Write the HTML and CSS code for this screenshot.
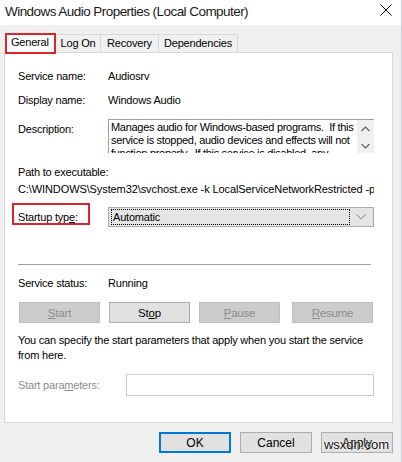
FILE: index.html
```html
<!DOCTYPE html>
<html>
<head>
<meta charset="utf-8">
<link rel="stylesheet" href="styles.css">
</head>
<body>
<div class="window">
  <div class="titlebar">
    <span class="title">Windows Audio Properties (Local Computer)</span>
    <svg class="close" width="12" height="12" viewBox="0 0 12 12"><path d="M0.5 0.5 L11.5 11.5 M11.5 0.5 L0.5 11.5" stroke="#000" stroke-width="1" fill="none"/></svg>
  </div>
  <div class="body">
    <div class="tabs">
      <div class="tab active">General</div>
      <div class="tab t-logon">Log On</div>
      <div class="tab t-recovery">Recovery</div>
      <div class="tab t-deps">Dependencies</div>
    </div>
    <div class="panel">
      <div class="row r-name"><span class="label">Service name:</span><span class="value">Audiosrv</span></div>
      <div class="row r-disp"><span class="label">Display name:</span><span class="value">Windows Audio</span></div>
      <div class="row r-desc">
        <span class="label desc-label">Description:</span>
        <div class="descbox">
          <div class="desctext">
            <div class="dline">Manages audio for Windows-based programs.&nbsp; If this</div>
            <div class="dline">service is stopped, audio devices and effects will not</div>
            <div class="dline">function properly.&nbsp; If this service is disabled, any</div>
          </div>
          <div class="scroll">
            <svg width="9" height="6" viewBox="0 0 9 6"><path d="M0.5 5 L4.5 1 L8.5 5" stroke="#606060" stroke-width="1.2" fill="none"/></svg>
            <svg width="9" height="6" viewBox="0 0 9 6"><path d="M0.5 1 L4.5 5 L8.5 1" stroke="#606060" stroke-width="1.2" fill="none"/></svg>
          </div>
        </div>
      </div>
      <div class="row r-path"><span class="label wide">Path to executable:</span></div>
      <div class="row r-pathval"><span class="pathval">C:\WINDOWS\System32\svchost.exe -k LocalServiceNetworkRestricted -p</span></div>
      <div class="row r-startup">
        <span class="label startup-label">Startup typ<u>e</u>:</span>
        <div class="combo">
          <div class="combo-sel">Automatic</div>
          <svg class="chev" width="10" height="6" viewBox="0 0 10 6"><path d="M0.5 0.5 L5 5 L9.5 0.5" stroke="#7a7a7a" stroke-width="1" fill="none"/></svg>
        </div>
      </div>
      <div class="sep"></div>
      <div class="row r-status"><span class="label">Service status:</span><span class="value">Running</span></div>
      <div class="btnrow">
        <div class="btn disabled"><u>S</u>tart</div>
        <div class="btn">St<u>o</u>p</div>
        <div class="btn disabled"><u>P</u>ause</div>
        <div class="btn disabled"><u>R</u>esume</div>
      </div>
      <p class="info">You can specify the start parameters that apply when you start the service from here.</p>
      <div class="row r-params">
        <span class="label gray">Start para<u>m</u>eters:</span>
        <div class="parambox"></div>
      </div>
    </div>
    <div class="footer">
      <div class="btn fbtn default">OK</div>
      <div class="btn fbtn">Cancel</div>
      <div class="btn fbtn">Apply</div>
    </div>
    <span class="watermark">wsxdn.com</span>
  </div>
</div>
</body>
</html>
```

FILE: styles.css
```css
html, body {
  margin: 0;
  padding: 0;
  background: #f0f0f0;
}
body {
  font-family: "Liberation Sans", Arial, sans-serif;
  font-size: 11px;
  letter-spacing: -0.2px;
  color: #000;
  width: 402px;
  height: 462px;
  overflow: hidden;
}
.window {
  position: relative;
  width: 402px;
  height: 462px;
  border-right: 1px solid #c9d3e0;
  box-sizing: border-box;
}
.titlebar {
  height: 25px;
  background: #fff;
  display: flex;
  align-items: center;
  justify-content: space-between;
  padding: 0 9px 0 5px;
}
.title {
  font-size: 13.5px;
  letter-spacing: -0.55px;
  color: #1a1a1a;
  margin-top: -3px;
}
.close {
  margin-top: -6px;
}
.body {
  position: relative;
  padding-top: 8px;
}
.tabs {
  display: flex;
  margin-left: 5px;
  height: 19px;
  align-items: flex-end;
}
.tab {
  height: 18px;
  box-sizing: border-box;
  border: 1px solid #d9d9d9;
  border-bottom: none;
  background: #f0f0f0;
  line-height: 17px;
  text-align: center;
  margin-left: -1px;
}
.t-logon { width: 46px; }
.t-recovery { width: 59px; }
.t-deps { width: 80px; }
.tab.active {
  height: 21px;
  background: #fff;
  border: 2px solid #e0222b;
  position: relative;
  z-index: 2;
  margin-bottom: -2px;
  line-height: 15px;
  width: 51px;
  text-align: left;
  padding: 0 0 0 4px;
  margin-left: 0;
}
.panel {
  margin-left: 4px;
  width: 389px;
  box-sizing: border-box;
  border: 1px solid #d9d9d9;
  background: #fff;
  padding: 15px 0 28px 13px;
  height: 371px;
}
.row {
  display: flex;
  align-items: center;
  height: 16px;
}
.label {
  width: 90px;
  flex: none;
  white-space: nowrap;
}
.label.wide { width: auto; }
.value {
  flex: none;
}
.gray {
  color: #8c8c8c;
}
.r-disp { margin-top: 8px; }
.r-desc {
  margin-top: 11px;
  height: 34px;
  align-items: flex-start;
}
.desc-label { margin-top: 4px; }
.descbox {
  width: 266px;
  height: 34px;
  box-sizing: border-box;
  border-top: 1px solid #a0a0a0;
  border-left: 1px solid #a0a0a0;
  display: flex;
  overflow: hidden;
}
.desctext {
  flex: 1;
  min-width: 0;
  padding: 1px 0 0 2px;
  line-height: 13px;
  letter-spacing: -0.3px;
  overflow: hidden;
}
.dline {
  white-space: nowrap;
}
.scroll {
  width: 17px;
  flex: none;
  background: #f0f0f0;
  display: flex;
  flex-direction: column;
  align-items: center;
  gap: 11px;
  padding-top: 6px;
  box-sizing: border-box;
}
.r-path { margin-top: 11px; }
.r-pathval {
  margin-top: 1px;
  overflow: hidden;
  width: 356px;
  white-space: nowrap;
}
.pathval { letter-spacing: -0.1px; }
.r-startup {
  margin-top: 10px;
  height: 20px;
  position: relative;
}
.startup-label {
  position: relative;
  width: 90px;
}
.startup-label::before {
  content: "";
  position: absolute;
  left: -6px;
  top: -8px;
  width: 74px;
  height: 18px;
  border: 2px solid #e0222b;
}
.combo {
  width: 266px;
  height: 20px;
  box-sizing: border-box;
  border: 1px solid #acacac;
  background: #e5e5e5;
  display: flex;
  align-items: center;
  padding: 2px;
}
.combo-sel {
  flex: 1;
  height: 14px;
  border: 1px dotted #000;
  line-height: 14px;
  padding-left: 1px;
  margin-right: 6px;
}
.chev { margin-right: 5px; }
.sep {
  margin-top: 37px;
  width: 353px;
  height: 1px;
  background: #a0a0a0;
}
.r-status { margin-top: 10px; }
.btnrow {
  margin-top: 11px;
  display: flex;
  gap: 9px;
}
.btn {
  height: 21px;
  width: 81px;
  box-sizing: border-box;
  border: 1px solid #adadad;
  background: #e1e1e1;
  display: flex;
  align-items: center;
  justify-content: center;
  font-size: 11.5px;
}
.btnrow .btn:first-child { margin-left: 1px; }
.btnrow .btn:nth-child(4) { margin-left: 3px; }
.btn.disabled {
  background: #cccccc;
  border-color: #bfbfbf;
  color: #8d8d8d;
}
.info {
  margin: 10px 0 0 0;
  line-height: 15px;
  width: 360px;
}
.r-params {
  margin-top: 11px;
  height: 22px;
}
.r-params .label { width: 108px; }
.parambox {
  width: 248px;
  height: 22px;
  box-sizing: border-box;
  border: 1px solid #cccccc;
  background: #fff;
}
.footer {
  display: flex;
  justify-content: flex-end;
  gap: 9px;
  margin-top: 9px;
  padding-right: 8px;
}
.fbtn {
  width: 72px;
  height: 21px;
  font-size: 12px;
  letter-spacing: 0;
}
.fbtn.default {
  border: 2px solid #0078d7;
}
.watermark {
  position: absolute;
  right: 12px;
  bottom: 1px;
  font-size: 13px;
  letter-spacing: 0;
  color: #111;
  text-shadow: 0 0 2px #fff, 0 0 2px #fff;
}
```
